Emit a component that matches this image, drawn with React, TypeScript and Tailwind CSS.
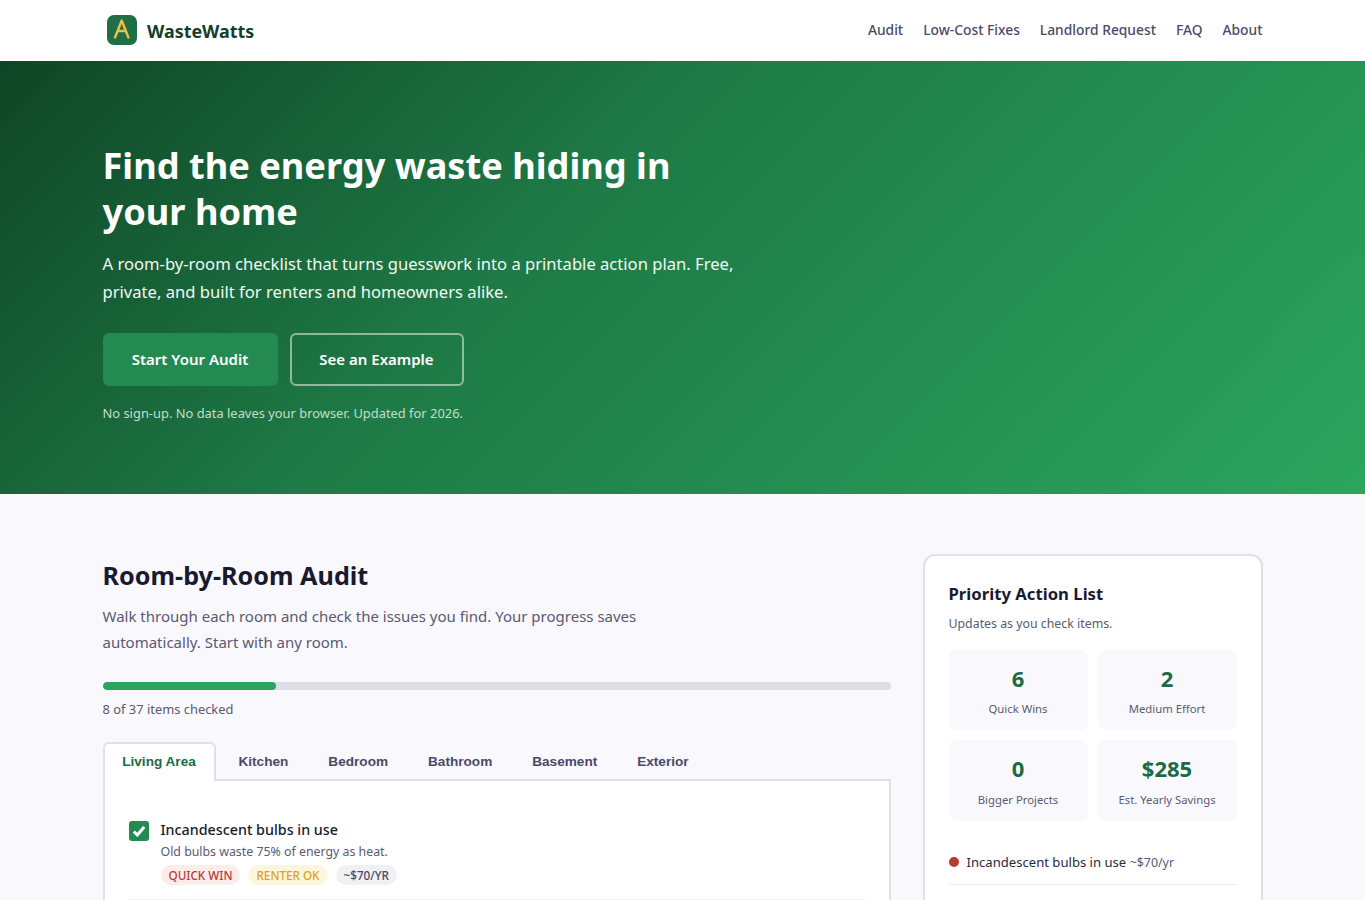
import React from "react";

function Logo() {
  return (
    <svg width="30" height="30" viewBox="0 0 30 30" className="shrink-0 -mt-[1px]">
      <rect x="0" y="0" width="30" height="30" rx="7" fill="#1f6e45" />
      <path d="M8 22.5 L14.7 5.5 L21.4 22.5 M10.6 16 H18.8" stroke="#e8c244" strokeWidth="2.4" fill="none" strokeLinecap="round" strokeLinejoin="round" />
    </svg>
  );
}

function Stat({ v, l }: { v: string; l: string }) {
  return (
    <div className="h-[80.5px] rounded-lg bg-[#f9f9fd] flex flex-col items-center pt-[13px]">
      <div className="text-[22px] leading-[30px] font-bold text-[#1a6b45]">{v}</div>
      <div className="text-[11.3px] leading-[20px] mt-[6.5px] text-[#5a5a70]">{l}</div>
    </div>
  );
}

function Tag({ c, t }: { c: string; t: string }) {
  return <span className={`h-5 px-2 rounded-full text-[11.7px] leading-5 font-medium ${c}`}>{t}</span>;
}

export default function App() {
  return (
    <div className="h-[900px] overflow-hidden bg-[#f8f8fd] [font-family:'Noto_Sans',sans-serif]">
      <header className="h-[61px] bg-white">
        <div className="max-w-[1160px] mx-auto h-full flex items-center justify-between">
          <div className="flex items-center gap-[10.5px] pl-[4px]">
            <Logo />
            <span className="text-[17.9px] font-bold text-[#123f2a] mt-[1px]">WasteWatts</span>
          </div>
          <nav className="flex gap-5 text-[13.8px] font-medium text-[#4a4a68]">
            <span>Audit</span><span>Low-Cost Fixes</span><span>Landlord Request</span><span>FAQ</span><span>About</span>
          </nav>
        </div>
      </header>
      <section className="h-[433px] bg-[linear-gradient(135deg,#0f4526_0%,#1e7a46_40%,#2ba55e_100%)] text-white">
        <div className="max-w-[1160px] mx-auto pt-[81px]">
          <h1 className="text-[36.2px] leading-[46px] font-bold max-w-[640px]">Find the energy waste hiding in your home</h1>
          <p className="mt-[16px] text-[16.6px] leading-[28px] max-w-[640px] text-[#f0f8f3]">A room-by-room checklist that turns guesswork into a printable action plan. Free, private, and built for renters and homeowners alike.</p>
          <div className="mt-[27px] flex gap-3">
            <button className="w-[175px] h-[53px] rounded-md bg-[#238a52] text-[15px] font-semibold">Start Your Audit</button>
            <button className="w-[174px] h-[53px] rounded-md border-2 border-white/50 text-[15px] font-semibold">See an Example</button>
          </div>
          <p className="mt-[18px] text-[12.9px] text-[#c0dfcb]">No sign-up. No data leaves your browser. Updated for 2026.</p>
        </div>
      </section>
      <main className="max-w-[1160px] mx-auto flex gap-8 pt-[60px]">
        <div className="w-[788px] shrink-0">
          <h2 className="mt-[3px] text-[25.2px] leading-[36px] font-bold text-[#1a1a2e]">Room-by-Room Audit</h2>
          <p className="mt-[10px] text-[15px] leading-[26px] max-w-[560px] text-[#5a5a70]">Walk through each room and check the issues you find. Your progress saves automatically. Start with any room.</p>
          <div className="mt-[27px] h-2 rounded-full bg-[#dedee6] overflow-hidden"><div className="h-full w-[22%] bg-[#2ca35f] rounded-full" /></div>
          <p className="mt-[10px] text-[12.9px] text-[#5a5a70]">8 of 37 items checked</p>
          <div className="mt-[23px] flex border-b-2 border-[#e0e0e8] h-[39px] text-[13.6px] font-bold text-[#4a4a68] [font-family:'Liberation_Sans',sans-serif]">
            <div className="w-[113px] h-[39px] pb-[2px] bg-white border-2 border-b-0 border-[#e0e0e8] rounded-t-md flex items-center justify-center text-[#1a6b45]">Living Area</div>
            <div className="px-5 h-[39px] flex items-center ml-[3px]">Kitchen</div>
            <div className="px-5 h-[39px] flex items-center">Bedroom</div>
            <div className="px-5 h-[39px] flex items-center">Bathroom</div>
            <div className="px-5 h-[39px] flex items-center">Basement</div>
            <div className="px-5 h-[39px] flex items-center">Exterior</div>
          </div>
          <div className="bg-white border-2 border-t-0 border-[#e0e0e8] px-[23px] pt-[40px] h-[200px]">
            <div className="flex gap-3 pl-[1px] pb-[14px] border-b border-[#f0f0f5]">
              <div className="w-5 h-5 rounded-[3px] bg-[#238a52] flex items-center justify-center shrink-0">
                <svg width="16" height="16" viewBox="0 0 16 16"><path d="M2.8 8.5 L6.3 12 L13.2 4" stroke="white" strokeWidth="3" fill="none" /></svg>
              </div>
              <div>
                <div className="text-[14.3px] font-medium leading-5 -mt-[1px] text-[#1a1a2e]">Incandescent bulbs in use</div>
                <div className="text-[12.35px] leading-5 mt-[2px] text-[#5a5a70]">Old bulbs waste 75% of energy as heat.</div>
                <div className="flex gap-2 mt-[3px]">
                  <Tag c="bg-[#fdecec] text-[#b83a33]" t="QUICK WIN" />
                  <Tag c="bg-[#fdf6dc] text-[#d9a520]" t="RENTER OK" />
                  <Tag c="bg-[#f0f0f5] text-[#4a4a5e]" t="~$70/YR" />
                </div>
              </div>
            </div>
          </div>
        </div>
        <aside className="w-[340px] h-[500px] shrink-0 bg-white border-2 border-[#e0e0e8] rounded-xl px-6 pt-[26px]">
          <h3 className="text-[16.7px] leading-6 font-bold text-[#1a1a2e]">Priority Action List</h3>
          <p className="mt-[9px] text-[12.35px] text-[#5a5a70]">Updates as you check items.</p>
          <div className="mt-[16px] grid grid-cols-2 gap-[10px]">
            <Stat v="6" l="Quick Wins" />
            <Stat v="2" l="Medium Effort" />
            <Stat v="0" l="Bigger Projects" />
            <Stat v="$285" l="Est. Yearly Savings" />
          </div>
          <div className="mt-[32px] flex items-center gap-2 pb-[12px] border-b border-[#eeeef2] text-[13.1px] text-[#2a2a3e]">
            <span className="w-[10px] h-[10px] rounded-full bg-[#b83a33]" />
            <span>Incandescent bulbs in use <span className="text-[12.4px] text-[#5a5a70]">~$70/yr</span></span>
          </div>
        </aside>
      </main>
    </div>
  );
}
